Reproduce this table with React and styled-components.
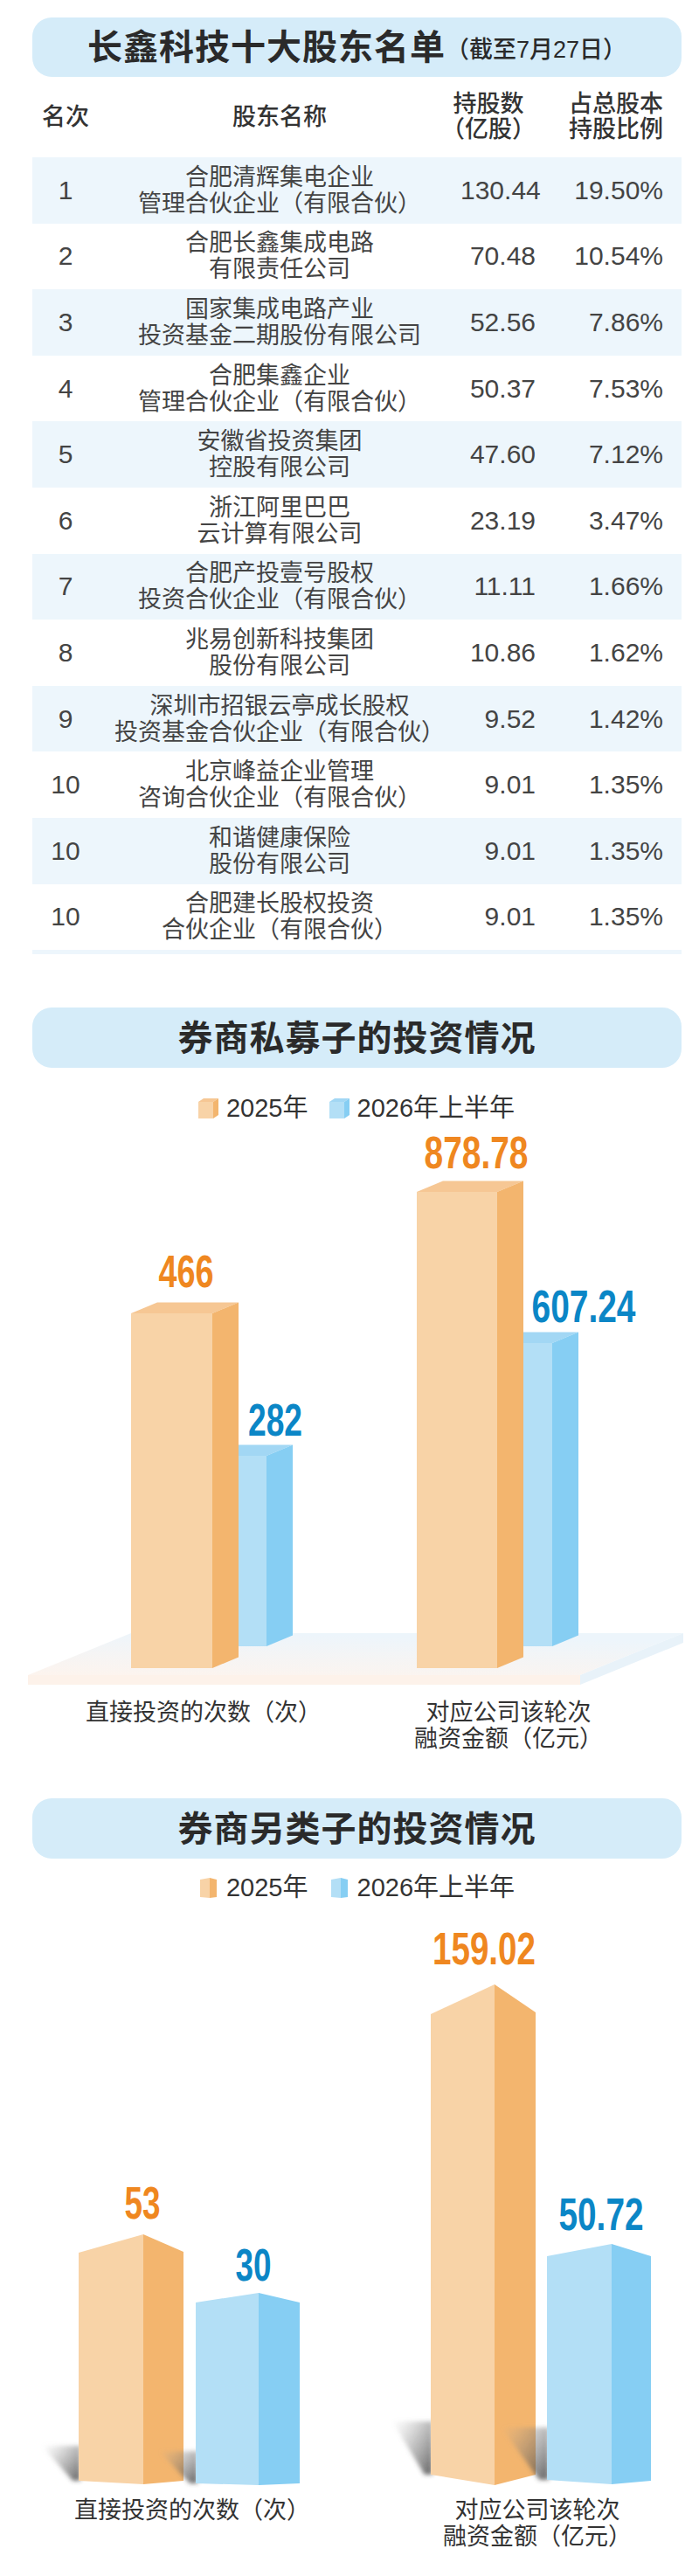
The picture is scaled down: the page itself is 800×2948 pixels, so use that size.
import React from "react";
import styled, { createGlobalStyle } from "styled-components";

const ORANGE = { front: "#f8d3a7", side: "#f3b56e", top: "#f6c794", text: "#ef8720" };
const BLUE = { front: "#b3dff6", side: "#86cef3", top: "#a2d7f4", text: "#0b86c6" };

const holders = [
  ["1", ["合肥清辉集电企业", "管理合伙企业（有限合伙）"], "130.44", "19.50%"],
  ["2", ["合肥长鑫集成电路", "有限责任公司"], "70.48", "10.54%"],
  ["3", ["国家集成电路产业", "投资基金二期股份有限公司"], "52.56", "7.86%"],
  ["4", ["合肥集鑫企业", "管理合伙企业（有限合伙）"], "50.37", "7.53%"],
  ["5", ["安徽省投资集团", "控股有限公司"], "47.60", "7.12%"],
  ["6", ["浙江阿里巴巴", "云计算有限公司"], "23.19", "3.47%"],
  ["7", ["合肥产投壹号股权", "投资合伙企业（有限合伙）"], "11.11", "1.66%"],
  ["8", ["兆易创新科技集团", "股份有限公司"], "10.86", "1.62%"],
  ["9", ["深圳市招银云亭成长股权", "投资基金合伙企业（有限合伙）"], "9.52", "1.42%"],
  ["10", ["北京峰益企业管理", "咨询合伙企业（有限合伙）"], "9.01", "1.35%"],
  ["10", ["和谐健康保险", "股份有限公司"], "9.01", "1.35%"],
  ["10", ["合肥建长股权投资", "合伙企业（有限合伙）"], "9.01", "1.35%"]
];

function Cube({ x, w, top, bottom, c, dx = 30, dy = -12.5 }) {
  const r = x + w;
  return (
    <g>
      <polygon points={`${x},${top} ${r},${top} ${r + dx},${top + dy} ${x + dx},${top + dy}`} fill={c.top} />
      <rect x={x} y={top} width={w} height={bottom - top} fill={c.front} />
      <polygon points={`${r},${top} ${r + dx},${top + dy} ${r + dx},${bottom + dy} ${r},${bottom}`} fill={c.side} />
    </g>
  );
}

function Prism({ l, m, r, t, b, c }) {
  return (
    <g>
      <polygon points={`${l},${t[0]} ${m},${t[1]} ${m},${b[1]} ${l},${b[0]}`} fill={c.front} />
      <polygon points={`${m},${t[1]} ${r},${t[2]} ${r},${b[2]} ${m},${b[1]}`} fill={c.side} />
    </g>
  );
}

// soft wedge shadow thrown to the left of a prism's foot
function Shadow({ x, y, w, h }) {
  return (
    <polygon
      points={`${x - w},${y} ${x},${y} ${x},${y + h} ${x - w * 0.2},${y + h}`}
      fill="url(#sh-g)"
      filter="url(#sh-f)"
    />
  );
}

function LegendIcon({ c, prism }) {
  return (
    <svg width="24" height="24" viewBox="0 0 24 24">
      {prism ? (
        <g>
          <polygon points="2,3 13,1 13,24 2,23" fill={c.front} />
          <polygon points="13,1 21,3 21,23 13,24" fill={c.side} />
        </g>
      ) : (
        <g>
          <polygon points="0,5 17,5 23,1 6,1" fill={c.top} />
          <rect x="0" y="5" width="17" height="19" fill={c.front} />
          <polygon points="17,5 23,1 23,20 17,24" fill={c.side} />
        </g>
      )}
    </svg>
  );
}

function Legend({ prism, $top }) {
  return (
    <LegendRow $top={$top}>
      <LegendItem>
        <LegendIcon c={ORANGE} prism={prism} />
        <span>2025年</span>
      </LegendItem>
      <LegendItem>
        <LegendIcon c={BLUE} prism={prism} />
        <span>2026年上半年</span>
      </LegendItem>
    </LegendRow>
  );
}

function PrivateChart() {
  return (
    <ChartSvg width="800" height="647" viewBox="0 0 800 647">
      <defs>
        <linearGradient id="floorTop" x1="0" y1="1" x2="0.3" y2="0">
          <stop offset="0" stopColor="#fdf4ee" />
          <stop offset="1" stopColor="#edf5fb" />
        </linearGradient>
      </defs>
      <polygon points="32,634 150,586 782,586 664,634" fill="url(#floorTop)" />
      <polygon points="32,634 664,634 664,645 32,645" fill="#fdf2ea" />
      <polygon points="664,634 782,586 782,597 664,645" fill="#e8f2f9" />

      <Cube x={212} w={93} top={383} bottom={601} c={BLUE} />
      <Cube x={539} w={93} top={254} bottom={601} c={BLUE} />
      <Cube x={150} w={93} top={220} bottom={626} c={ORANGE} />
      <Cube x={477} w={92} top={81} bottom={626} c={ORANGE} />

      <Value x={213} y={190} textLength="63" fill={ORANGE.text}>466</Value>
      <Value x={315} y={360} textLength="62" fill={BLUE.text}>282</Value>
      <Value x={545} y={54} textLength="119" fill={ORANGE.text}>878.78</Value>
      <Value x={668} y={230} textLength="119" fill={BLUE.text}>607.24</Value>
    </ChartSvg>
  );
}

function AltChart() {
  return (
    <ChartSvg width="800" height="675" viewBox="0 0 800 675">
      <defs>
        <linearGradient id="sh-g" x1="1" y1="0.8" x2="0" y2="0">
          <stop offset="0" stopColor="#3a3a3a" stopOpacity="0.7" />
          <stop offset="0.5" stopColor="#777" stopOpacity="0.4" />
          <stop offset="1" stopColor="#aaa" stopOpacity="0" />
        </linearGradient>
        <filter id="sh-f" x="-50%" y="-50%" width="200%" height="200%">
          <feGaussianBlur stdDeviation="2.5" />
        </filter>
      </defs>
      <Shadow x={92} y={624} w={44} h={40} />
      <Shadow x={495} y={596} w={46} h={61} />
      <Prism l={90} m={164} r={210} t={[403, 382, 402]} b={[664, 668, 664]} c={ORANGE} />
      <Prism l={493} m={566} r={613} t={[130, 96, 128]} b={[657, 669, 657]} c={ORANGE} />

      <Shadow x={226} y={630} w={44} h={37} />
      <Shadow x={628} y={603} w={54} h={60} />
      <Prism l={224} m={296} r={343} t={[460, 449, 460]} b={[667, 669, 667]} c={BLUE} />
      <Prism l={626} m={700} r={745} t={[407, 393, 407]} b={[663, 668, 664]} c={BLUE} />

      <Value x={163} y={364} textLength="41" fill={ORANGE.text}>53</Value>
      <Value x={290} y={435} textLength="41" fill={BLUE.text}>30</Value>
      <Value x={554} y={73} textLength="118" fill={ORANGE.text}>159.02</Value>
      <Value x={688} y={377} textLength="97" fill={BLUE.text}>50.72</Value>
    </ChartSvg>
  );
}

export default function App() {
  return (
    <Page>
      <GlobalStyle />

      <TitleBox $top={20} $height={68}>
        <Title>长鑫科技十大股东名单</Title>
        <SubTitle>（截至7月27日）</SubTitle>
      </TitleBox>

      <Table>
        <HeaderRow>
          <HeadCell>名次</HeadCell>
          <HeadCell>股东名称</HeadCell>
          <HeadCell $right>
            <HeadText>
              持股数
              <br />
              （亿股）
            </HeadText>
          </HeadCell>
          <HeadCell $right>
            <HeadText>
              占总股本
              <br />
              持股比例
            </HeadText>
          </HeadCell>
        </HeaderRow>
        {holders.map(([rank, name, shares, ratio], i) => (
          <Row key={i} $striped={i % 2 === 0}>
            <RankCell>{rank}</RankCell>
            <NameCell>
              {name[0]}
              <br />
              {name[1]}
            </NameCell>
            <NumCell>{shares}</NumCell>
            <NumCell>{ratio}</NumCell>
          </Row>
        ))}
        <EndStrip />
      </Table>

      <TitleBox $top={61} $height={69}>
        <Title>券商私募子的投资情况</Title>
      </TitleBox>
      <Legend $top={31} />
      <PrivateChart />
      <Labels $cols="466px 232px" $top={15}>
        <AxisLabel>直接投资的次数（次）</AxisLabel>
        <AxisLabel>
          对应公司该轮次
          <br />
          融资金额（亿元）
        </AxisLabel>
      </Labels>

      <TitleBox $top={53} $height={69}>
        <Title>券商另类子的投资情况</Title>
      </TitleBox>
      <Legend prism $top={18} />
      <AltChart />
      <Labels $cols="440px 350px" $top={8}>
        <AxisLabel>直接投资的次数（次）</AxisLabel>
        <AxisLabel>
          对应公司该轮次
          <br />
          融资金额（亿元）
        </AxisLabel>
      </Labels>
    </Page>
  );
}

const GlobalStyle = createGlobalStyle`
  * {
    box-sizing: border-box;
  }
  body {
    margin: 0;
    background: #fff;
    font-family: "Liberation Sans", "Noto Sans CJK SC", sans-serif;
  }
`;

const Page = styled.div`
  width: 800px;
  height: 2948px;
  padding-bottom: 30px;
  background: #fff;
  overflow: hidden;
`;

const TitleBox = styled.div`
  margin: ${(p) => p.$top}px 20px 0 37px;
  height: ${(p) => p.$height}px;
  border-radius: 22px;
  background: #d5ecf9;
  display: flex;
  align-items: center;
  justify-content: center;
  color: #2a2a2a;
  font-family: "Liberation Sans", "Noto Sans CJK SC", sans-serif;
  font-weight: 700;
`;

const Title = styled.span`
  font-size: 40px;
  line-height: 1;
  letter-spacing: 1px;
`;

const SubTitle = styled.span`
  font-size: 27px;
  line-height: 1;
  margin-top: 6px;
  font-weight: 500;
`;

const Table = styled.div`
  margin: 0 20px 0 37px;
  color: #444;
`;

const columns = `
  display: grid;
  grid-template-columns: 76px 414px 86px 146px;
  padding-right: 21px;
  align-items: center;
`;

const HeaderRow = styled.div`
  ${columns}
  height: 92px;
  color: #333;
  font-size: 27px;
  line-height: 29px;
  font-weight: 500;
`;

const HeadCell = styled.div`
  display: flex;
  justify-content: ${(p) => (p.$right ? "flex-end" : "center")};
  white-space: nowrap;
`;

const HeadText = styled.div`
  text-align: center;
`;

const Row = styled.div`
  ${columns}
  height: 75.6px;
  background: ${(p) => (p.$striped ? "#edf6fc" : "#fff")};
`;

const RankCell = styled.div`
  text-align: center;
  font-size: 30px;
`;

const NameCell = styled.div`
  text-align: center;
  font-size: 27px;
  line-height: 30px;
  white-space: nowrap;
`;

const NumCell = styled.div`
  text-align: right;
  font-size: 30px;
  white-space: nowrap;
`;

const EndStrip = styled.div`
  height: 5px;
  background: #edf6fc;
`;

const LegendRow = styled.div`
  margin-top: ${(p) => p.$top}px;
  height: 30px;
  display: flex;
  justify-content: center;
  align-items: center;
  gap: 24px;
  padding-left: 16px;
  color: #333;
  font-size: 29px;
  line-height: 30px;
`;

const LegendItem = styled.div`
  display: flex;
  align-items: center;
  gap: 8px;
  white-space: nowrap;

  svg {
    display: block;
  }
`;

const ChartSvg = styled.svg`
  display: block;
`;

const Value = styled.text.attrs({ lengthAdjust: "spacingAndGlyphs", textAnchor: "middle" })`
  font-family: "Liberation Sans", "DejaVu Sans", sans-serif;
  font-weight: 700;
  font-size: 52px;
`;

const Labels = styled.div`
  margin-top: ${(p) => p.$top}px;
  display: grid;
  grid-template-columns: ${(p) => p.$cols};
  color: #333;
  font-size: 27px;
  line-height: 30px;
`;

const AxisLabel = styled.div`
  text-align: center;
  white-space: nowrap;
`;
